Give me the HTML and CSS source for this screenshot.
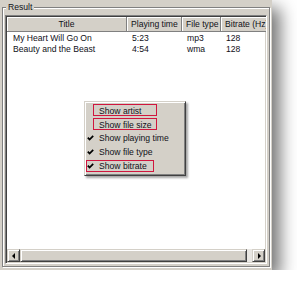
FILE: index.html
```html
<!DOCTYPE html>
<html lang="en">
<head>
    <meta charset="UTF-8">
    <title>Result</title>
    <link rel="stylesheet" href="styles.css">
</head>
<body>
    <div class="window">
        <div class="group">
            <span class="legend">Result</span>
            <div class="list">
                <div class="head">
                    <div class="col c-title center">Title</div>
                    <div class="col c-time">Playing time</div>
                    <div class="col c-type">File type</div>
                    <div class="col c-rate">Bitrate (Hz)</div>
                </div>
                <div class="rows">
                    <div class="row">
                        <div class="c-title">My Heart Will Go On</div>
                        <div class="c-time">5:23</div>
                        <div class="c-type">mp3</div>
                        <div class="c-rate">128</div>
                    </div>
                    <div class="row">
                        <div class="c-title">Beauty and the Beast</div>
                        <div class="c-time">4:54</div>
                        <div class="c-type">wma</div>
                        <div class="c-rate">128</div>
                    </div>
                </div>
                <div class="hscroll">
                    <div class="sbtn"><span class="arrow-left"></span></div>
                    <div class="sbtn thumb"></div>
                    <div class="track"></div>
                    <div class="sbtn"><span class="arrow-right"></span></div>
                </div>
            </div>
        </div>

        <div class="menu">
            <div class="item"><span class="check"></span>Show artist<span class="hl hl-a"></span></div>
            <div class="item"><span class="check"></span>Show file size<span class="hl hl-a"></span></div>
            <div class="item"><span class="check"><svg width="7" height="6" viewBox="0 0 7 6"><path d="M0.8 2.6 L2.6 4.6 L6.2 0.8" fill="none" stroke="#000" stroke-width="1.7"/></svg></span>Show playing time</div>
            <div class="item"><span class="check"><svg width="7" height="6" viewBox="0 0 7 6"><path d="M0.8 2.6 L2.6 4.6 L6.2 0.8" fill="none" stroke="#000" stroke-width="1.7"/></svg></span>Show file type</div>
            <div class="item"><span class="check"><svg width="7" height="6" viewBox="0 0 7 6"><path d="M0.8 2.6 L2.6 4.6 L6.2 0.8" fill="none" stroke="#000" stroke-width="1.7"/></svg></span>Show bitrate<span class="hl hl-b"></span></div>
        </div>
    </div>
</body>
</html>
```

FILE: styles.css
```css
body {
    margin: 0;
    background: #fff;
    font-family: 'Liberation Sans', Arial, sans-serif;
    font-size: 8.6px;
    color: #101018;
}
.window {
    position: relative;
    width: 272px;
    height: 270px;
    box-sizing: border-box;
    padding: 7px 2px 3px 2px;
    background: #d4d0c8;
    box-shadow: 8px 8px 16px rgba(0, 0, 0, 0.55);
}
.group {
    position: relative;
    height: 100%;
    box-sizing: border-box;
    padding: 7px 2px 2px 2px;
    border: 1px solid #808080;
    box-shadow: inset 1px 1px #fff, 1px 1px #fff;
}
.legend {
    position: absolute;
    top: -6px;
    left: 3px;
    padding: 0 2px;
    line-height: 11px;
    background: #d4d0c8;
}
.list {
    height: 100%;
    box-sizing: border-box;
    padding: 1px;
    display: flex;
    flex-direction: column;
    overflow: hidden;
    background: #fff;
    border: 1px solid;
    border-color: #808080 #fff #fff #808080;
    box-shadow: inset 1px 1px #404040, inset -1px -1px #d4d0c8;
}
.head {
    display: flex;
    flex: none;
    height: 15px;
}
.col {
    box-sizing: border-box;
    height: 15px;
    line-height: 14px;
    padding-left: 4px;
    white-space: nowrap;
    overflow: hidden;
    background: #d4d0c8;
    border-right: 1px solid #808080;
    border-bottom: 1px solid #808080;
    box-shadow: inset 1px 1px #fff;
}
.col.center {
    padding-left: 0;
    text-align: center;
}
.c-title { width: 120px; flex: none; }
.c-time { width: 55px; flex: none; }
.c-type { width: 39px; flex: none; }
.c-rate { width: 70px; flex: none; }
.rows {
    flex: 1;
    padding-top: 1px;
}
.row {
    display: flex;
    height: 11px;
    line-height: 11px;
}
.row div {
    box-sizing: border-box;
    padding-left: 5px;
    white-space: nowrap;
    overflow: hidden;
}
.row .c-title {
    padding-left: 6px;
}
.hscroll {
    display: flex;
    flex: none;
    height: 13px;
}
.sbtn {
    width: 13px;
    flex: none;
    box-sizing: border-box;
    display: flex;
    align-items: center;
    justify-content: center;
    background: #d4d0c8;
    border: 1px solid;
    border-color: #d4d0c8 #404040 #404040 #d4d0c8;
    box-shadow: inset 1px 1px #fff, inset -1px -1px #808080;
}
.thumb {
    width: 227px;
}
.track {
    flex: 1;
    background: #e9e7e3;
}
.arrow-left, .arrow-right {
    width: 0;
    height: 0;
    border-top: 3px solid transparent;
    border-bottom: 3px solid transparent;
}
.arrow-left {
    border-right: 3px solid #000;
    margin-right: 1px;
}
.arrow-right {
    border-left: 3px solid #000;
    margin-left: 1px;
}
.menu {
    position: absolute;
    left: 84px;
    top: 101px;
    width: 102px;
    box-sizing: border-box;
    padding: 2px 1px;
    background: #d4d0c8;
    border: 1px solid;
    border-color: #d4d0c8 #404040 #404040 #d4d0c8;
    box-shadow: inset 1px 1px #fff, inset -1px -1px #808080, 2px 2px 2px rgba(0, 0, 0, 0.35);
}
.item {
    position: relative;
    display: flex;
    align-items: center;
    height: 13.8px;
    white-space: nowrap;
}
.check {
    width: 13px;
    flex: none;
    display: flex;
    align-items: center;
    padding-left: 1px;
    box-sizing: border-box;
}
.hl {
    position: absolute;
    top: 0;
    height: 12px;
    box-sizing: border-box;
    border: 1.5px solid #d0163e;
}
.hl-a {
    left: 7px;
    width: 64px;
}
.hl-b {
    left: 0;
    width: 68px;
    top: 1px;
}
```
